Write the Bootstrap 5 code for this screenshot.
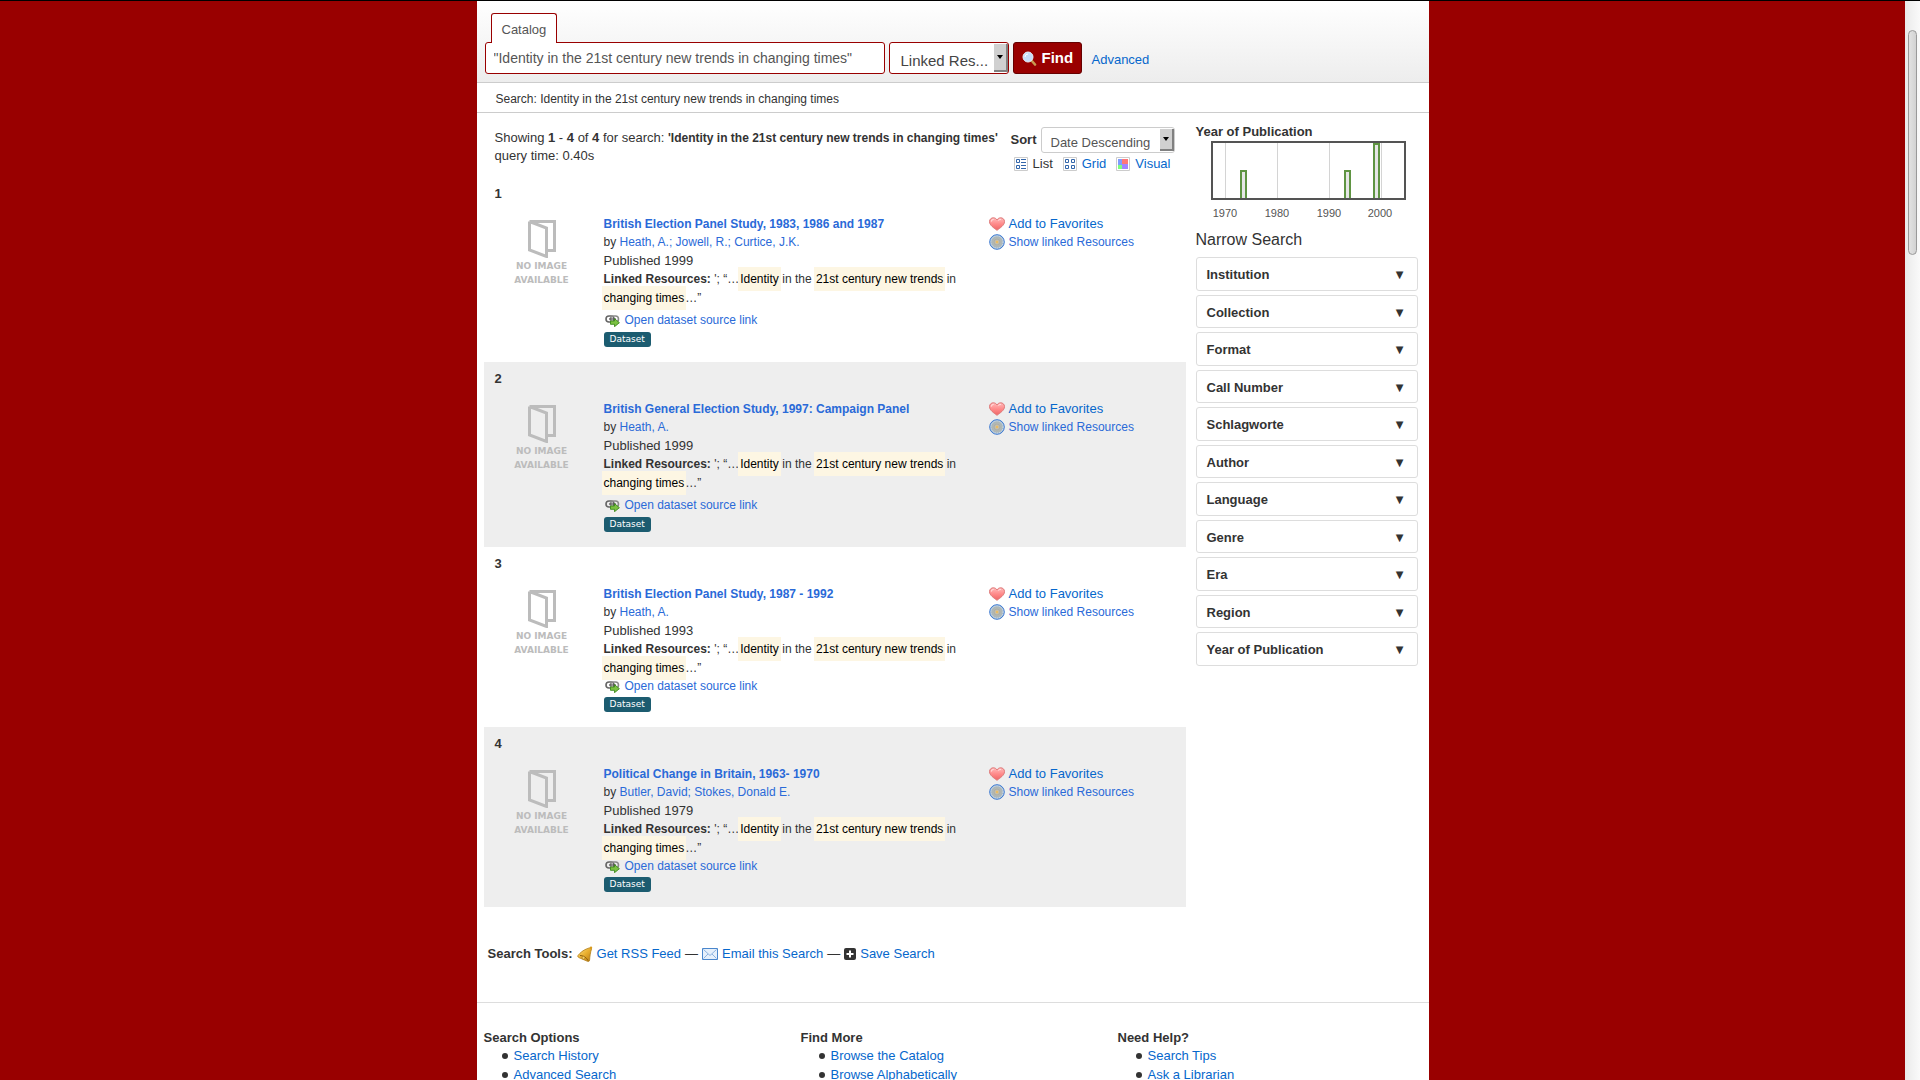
<!DOCTYPE html>
<html lang="en">
<head>
<meta charset="utf-8">
<meta name="viewport" content="width=device-width, initial-scale=1">
<title>Search: Identity in the 21st century new trends in changing times</title>
<link href="https://cdn.jsdelivr.net/npm/bootstrap@5.3.0/dist/css/bootstrap.min.css" rel="stylesheet">
<style>
  body { font-family: "Liberation Sans", Arial, sans-serif; font-size: 13px; line-height: 18px; color: #333; background: #900; overflow: hidden; }
  a { color: #0667cc; text-decoration: none; }
  a:hover { text-decoration: underline; }
  svg { flex: none; display: block; }
  .viewport { height: 100vh; border-top: 1px solid #000; overflow: hidden; }
  .sheet { width: 100%; max-width: 952px; background: #fff; min-height: 100vh; }

  .searchbar { background: linear-gradient(#fff, #ededed); border-bottom: 1px solid #ccc; padding: 12px 8px 8px; }
  .source-tab { display: inline-block; background: #fff; border: 1px solid #900; border-bottom: 0; border-radius: 3px 3px 0 0; padding: 7px 10px 4px; height: 30px; margin: 0 0 -1px 6px; color: #555; position: relative; z-index: 1; }
  .query-box { width: 400px; height: 32px; border: 1px solid #900; border-radius: 3px; padding: 0 8px; font-size: 14px; color: #555; background: #fff; }
  .picker { position: relative; }
  .picker select { appearance: none; background: #fff; color: #444; border-radius: 3px; width: 100%; }
  .picker-kind { width: 120px; }
  .picker-kind select { height: 32px; border: 1px solid #900; font-size: 15px; padding: 5px 16px 0 11px; }
  .picker-sort { width: 134px; }
  .picker-sort select { height: 26px; border: 1px solid #ccc; font-size: 13px; color: #555; padding: 6px 16px 0 9px; }
  .picker-arrow { position: absolute; top: 2px; right: 1px; bottom: 2px; width: 14px; background: #d0d0d0; border: solid #808080; border-width: 0 2px 2px 0; pointer-events: none; display: flex; align-items: center; justify-content: center; }
  .find-btn { height: 32px; width: 69px; background: #900; border: 1px solid #600; border-radius: 3px; color: #fff; font-weight: 700; font-size: 15px; padding: 0 8px; display: flex; align-items: center; gap: 5px; }
  .advanced-link { margin-left: 10px; padding-top: 3px; }
  .crumbs { border-bottom: 1px solid #ccc; font-size: 12px; line-height: 18px; padding: 7px 19px 4px; }

  .results { width: 702px; margin-left: 7px; }
  .summary { padding: 14px 11px 0; min-height: 64px; }
  .summary-text { padding-top: 2px; }
  .summary-text .terms { font-size: 12px; }
  .views { gap: 10px; padding: 2px 4px 0 0; }
  .view-link { display: flex; align-items: center; gap: 5px; }

  .record { padding: 8px 0 14px 11px; }
  .record.roomy { padding-bottom: 15px; }
  .record:nth-of-type(even) { background: #eee; }
  .record-no { font-weight: 700; margin-bottom: 12px; }
  .cover { width: 94px; margin-right: 15px; display: flex; flex-direction: column; align-items: center; font: 700 9px/14px "DejaVu Sans", sans-serif; color: #bcbcbc; text-align: center; }
  .cover svg { margin: 5px 0 1px; }
  .details { font-size: 12px; padding-right: 20px; }
  .details a { color: #2a6ad8; }
  .details .record-title { font-weight: 700; font-size: 12px; line-height: 18px; margin: 0; }
  .issued { font-size: 13px; line-height: 19px; }
  .linked { line-height: 19px; margin: 0; }
  .hit { background: #fdf6e3; color: #000; padding: 5px 2px; margin: 0 -2px 0 -1px; }
  .linked br + .hit { margin: 0 -1px 0 -2px; }
  .source-link { display: flex; align-items: center; gap: 5px; margin: 0; padding-left: 1px; line-height: 17px; }
  .roomy .source-link { margin-top: 4px; }
  .kind-tag { display: inline-block; background: #1c5c70; color: #fff; border-radius: 3px; font: 9px/15px "DejaVu Sans", sans-serif; padding: 0 6px; vertical-align: top; margin-top: 2px; }
  .roomy .kind-tag { margin-top: 3px; }
  .actions { width: 197px; }
  .actions a { display: flex; align-items: center; gap: 4px; }
  .actions .aux { color: #2a6ad8; font-size: 12px; }

  .tools { padding: 38px 4px 39px; }
  .facets { width: 222px; margin: 10px 11px 0 10px; }
  .facets h3 { font-size: 13px; font-weight: 700; line-height: 17px; margin: 0; }
  .facets h4 { font-size: 16px; font-weight: 400; line-height: 20px; margin: 10px 0 7px; }
  .facet { width: 100%; display: flex; justify-content: space-between; align-items: center; height: 34px; margin-bottom: 4px; background: #fff; border: 1px solid #ddd; border-radius: 3px; padding: 2px 13px 0 10px; font-weight: 700; color: #333; }
  .facet:nth-child(even) { height: 33px; }
  .facet span:last-child { font: 10px/10px "DejaVu Sans", sans-serif; }

  .foot { border-top: 1px solid #ddd; padding: 25px 0 0 7px; }
  .foot section { width: 317px; flex: none; }
  .foot section:last-child { flex: 0 1 317px; }
  .foot h5 { font-size: 13px; line-height: 19px; font-weight: 700; margin: 0; }
  .foot ul { padding-left: 18px; margin: 0; line-height: 18px; list-style: none; }
  .foot li { display: flex; align-items: center; gap: 6px; margin-bottom: 1px; }
  .foot li::before { content: ""; width: 6px; height: 6px; border-radius: 50%; background: #333; }

  .scroll-track { width: 15px; background: linear-gradient(90deg, #eaeaea, #fafafa); padding: 29px 3px 0; }
  .scroll-thumb { width: 9px; height: 225px; border: 1px solid #999; border-radius: 5px; background: linear-gradient(90deg, #e2e2e2, #d2d2d2); }
</style>
<script src="https://cdn.jsdelivr.net/npm/bootstrap@5.3.0/dist/js/bootstrap.bundle.min.js"></script>
</head>
<body>
<svg width="0" height="0" class="position-absolute" aria-hidden="true">
  <defs>
    <linearGradient id="gHeart" x1="0" y1="0" x2="0" y2="1"><stop offset="0" stop-color="#fbb"/><stop offset=".5" stop-color="#ff8a8a"/><stop offset="1" stop-color="#e66"/></linearGradient>
    <linearGradient id="gBell" x1="0" y1="0" x2="1" y2="1"><stop offset="0" stop-color="#fbe08a"/><stop offset=".5" stop-color="#eab030"/><stop offset="1" stop-color="#b87a10"/></linearGradient>
    <radialGradient id="gHub"><stop offset="0" stop-color="#e8c890"/><stop offset=".35" stop-color="#b9b9ae"/><stop offset=".75" stop-color="#a9b6bb"/><stop offset="1" stop-color="#b5cdea"/></radialGradient>
    <symbol id="i-book" viewBox="0 0 28 38"><path d="M1.5 1.5h25v29h-8M1.5 1.5v28.500l17 6.500V8L1.500 1.500" fill="none" stroke="#bcbcbc" stroke-width="3"/></symbol>
    <symbol id="i-heart" viewBox="0 0 16 14"><path d="M8 13.300C5 11 .5 8.300 .5 4.600.5 2.300 2.300.8 4.300.8 6 .8 7.300 1.700 8 3c.7-1.300 2-2.200 3.700-2.200 2 0 3.800 1.500 3.800 3.800C15.500 8.300 11 11 8 13.300z" fill="url(#gHeart)" stroke="#d77"/><path d="M2.500 4.500c0-1.300.8-2 2-2M9.500 3.500c.5-.8 1.300-1 2.300-1" stroke="#fff" fill="none" opacity=".7"/></symbol>
    <symbol id="i-hub" viewBox="0 0 16 16"><circle cx="8" cy="8" r="7.300" fill="url(#gHub)" stroke="#3a78d0"/><circle cx="8" cy="8" r="6" fill="none" stroke="#d8e6f6" stroke-width=".8" stroke-dasharray="1 1"/><circle cx="8" cy="8" r="3" fill="none" stroke="#a4aaa8" stroke-width=".6"/><circle cx="8" cy="8" r="1" fill="#efb850"/></symbol>
    <symbol id="i-chain" viewBox="0 0 15 13"><rect x="1" y="2" width="8" height="6" rx="3" fill="none" stroke="#666" stroke-width="1.600"/><rect x="5.500" y="2" width="8" height="6" rx="3" fill="none" stroke="#8a8a8a" stroke-width="1.600"/><path d="M4 5h7" stroke="#555" stroke-width="1.200"/><path d="M5.500 7h4V4.700L14.400 8.700 9.500 12.700v-2.400h-4z" fill="#7cc142" stroke="#3c8a1c" stroke-width=".9"/></symbol>
  </defs>
</svg>

<div class="viewport d-flex">
  <div class="flex-grow-1 d-flex justify-content-center">
  <div class="sheet">
    <header class="searchbar">
      <a class="source-tab" href="#">Catalog</a>
      <form class="d-flex align-items-center" onsubmit="return false">
        <input class="query-box me-1" type="text" aria-label="Search terms" value="&quot;Identity in the 21st century new trends in changing times&quot;">
        <div class="picker picker-kind me-1">
          <select aria-label="Search type"><option>Linked Res...</option></select>
          <span class="picker-arrow"><svg width="6" height="4"><path d="M0 0h6L3 4z" fill="#000"/></svg></span>
        </div>
        <button class="find-btn" type="submit">
          <svg width="15" height="15" viewBox="0 0 15 15"><path d="M9 9l4 4.500" stroke="#c89a50" stroke-width="2.600" stroke-linecap="round"/><circle cx="6" cy="6" r="5" fill="#c6defa" stroke="#e8f0fa"/><path d="M3 6a3 3 0 0 1 3-3" stroke="#fff" fill="none"/></svg>
          Find</button>
        <a class="advanced-link" href="#">Advanced</a>
      </form>
    </header>
    <nav class="crumbs" aria-label="Breadcrumb">Search: Identity in the 21st century new trends in changing times</nav>

    <div class="d-flex">
      <main class="results">
        <div class="summary d-flex justify-content-between">
          <div class="summary-text">Showing <b>1</b> - <b>4</b> of <b>4</b> for search: <b class="terms">'Identity in the 21st century new trends in changing times'</b><br>query time: 0.40s</div>
          <div>
            <div class="d-flex gap-1 justify-content-end">
              <label class="fw-bold pt-1" for="sort">Sort</label>
              <div class="picker picker-sort"><select id="sort"><option>Date Descending</option></select>
                <span class="picker-arrow"><svg width="6" height="4"><path d="M0 0h6L3 4z" fill="#000"/></svg></span></div>
            </div>
            <div class="views d-flex justify-content-end">
              <span class="view-link"><svg width="14" height="14"><path d="M.5.5h13v13H.5z" fill="#fff" stroke="#ccc"/><path d="M2.500 2.500h3v3h-3zM2.500 8.500h3v3h-3z" fill="none" stroke="#36a"/><path d="M7 2.500h5M7 5.500h5M7 8.500h5M7 11.500h5" stroke="#36a"/></svg>List</span>
              <a class="view-link" href="#"><svg width="14" height="14"><path d="M.5.5h13v13H.5z" fill="#fff" stroke="#ccc"/><path d="M2.500 2.500h3v3h-3zM8.500 2.500h3v3h-3zM2.500 8.500h3v3h-3zM8.500 8.500h3v3h-3z" fill="none" stroke="#36a"/></svg>Grid</a>
              <a class="view-link" href="#"><svg width="14" height="14"><path d="M.5.5h13v13H.5z" fill="#fff" stroke="#ccc"/><path d="M2 2h4v6H2z" fill="#7f9cff"/><path d="M6 2h6v5H6z" fill="#ff7777"/><path d="M2 8h4v4H2z" fill="#7dff7d"/><path d="M6 7h6v5H6z" fill="#a184ff"/></svg>Visual</a>
            </div>
          </div>
        </div>

        <div id="records"></div>

        <div class="tools d-flex align-items-center gap-1">
          <b>Search Tools:</b>
          <svg width="16" height="16" viewBox="0 0 16 16"><path d="M14 1.500C10 2.500 5.500 4 1 9.500c-.8 1.200.5 2 2 2.600l7 3c1.500.6 2.500.5 2.600-1 .2-4 .9-8 1.900-11z" fill="url(#gBell)" stroke="#b07c18" stroke-width=".8"/><path d="M3 9.500c3.500 0 6.500 2 8 5" stroke="#8f5f0c" fill="none"/><circle cx="14" cy="1.800" r="1.200" fill="#d89a20"/><circle cx="6.500" cy="11.800" r="1.500" fill="#f7d36a" stroke="#9a6810" stroke-width=".6"/></svg>
          <a href="#">Get RSS Feed</a> <span>—</span>
          <svg width="16" height="12"><path d="M.5.5h15v11H.5z" fill="#e6f0fb" stroke="#4a86cc"/><path d="M1.500 1.500L8 7.500l6.500-6M1.500 10.500l4.500-4.500M14.500 10.500L10 6" fill="none" stroke="#8eb3df"/></svg>
          <a href="#">Email this Search</a> <span>—</span>
          <svg width="12" height="12"><rect width="12" height="12" rx="2" fill="#333"/><path d="M6 2.500v7M2.500 6h7" stroke="#fff" stroke-width="2"/></svg>
          <a href="#">Save Search</a>
        </div>
      </main>

      <aside class="facets">
        <h3>Year of Publication</h3>
        <svg width="222" height="80" role="img" aria-label="Results by year">
          <path d="M29.500 2v58M81.500 2v58M133.500 2v58M185.500 2v58" stroke="#d4d4d4"/>
          <g fill="#e6e6e6" stroke="#5f9442" stroke-width="2"><path d="M45 60V31h5v29M149 60V31h5v29M178 60V4h5v56"/></g>
          <rect x="16" y="2" width="193" height="57" fill="none" stroke="#545454" stroke-width="2"/>
          <g font-family="Liberation Sans, Arial, sans-serif" font-size="11" fill="#545454" text-anchor="middle"><text x="29" y="77">1970</text><text x="81" y="77">1980</text><text x="133" y="77">1990</text><text x="184" y="77">2000</text></g>
        </svg>
        <h4>Narrow Search</h4>
        <div>
          <button class="facet" type="button"><span>Institution</span><span>▼</span></button>
          <button class="facet" type="button"><span>Collection</span><span>▼</span></button>
          <button class="facet" type="button"><span>Format</span><span>▼</span></button>
          <button class="facet" type="button"><span>Call Number</span><span>▼</span></button>
          <button class="facet" type="button"><span>Schlagworte</span><span>▼</span></button>
          <button class="facet" type="button"><span>Author</span><span>▼</span></button>
          <button class="facet" type="button"><span>Language</span><span>▼</span></button>
          <button class="facet" type="button"><span>Genre</span><span>▼</span></button>
          <button class="facet" type="button"><span>Era</span><span>▼</span></button>
          <button class="facet" type="button"><span>Region</span><span>▼</span></button>
          <button class="facet" type="button"><span>Year of Publication</span><span>▼</span></button>
        </div>
      </aside>
    </div>

    <footer class="foot d-flex">
      <section><h5>Search Options</h5><ul><li><a href="#">Search History</a></li><li><a href="#">Advanced Search</a></li></ul></section>
      <section><h5>Find More</h5><ul><li><a href="#">Browse the Catalog</a></li><li><a href="#">Browse Alphabetically</a></li></ul></section>
      <section><h5>Need Help?</h5><ul><li><a href="#">Search Tips</a></li><li><a href="#">Ask a Librarian</a></li></ul></section>
    </footer>
  </div>
  </div>
  <div class="scroll-track" aria-hidden="true"><div class="scroll-thumb"></div></div>
</div>
<script>
  const records = [
    { title: "British Election Panel Study, 1983, 1986 and 1987", authors: ["Heath, A.", "Jowell, R.", "Curtice, J.K."], year: 1999, roomy: true },
    { title: "British General Election Study, 1997: Campaign Panel", authors: ["Heath, A."], year: 1999, roomy: true },
    { title: "British Election Panel Study, 1987 - 1992", authors: ["Heath, A."], year: 1993 },
    { title: "Political Change in Britain, 1963- 1970", authors: ["Butler, David", "Stokes, Donald E."], year: 1979 }
  ];
  document.getElementById("records").innerHTML = records.map((r, i) => `
    <article class="record ${r.roomy ? "roomy" : ""}">
      <div class="record-no">${i + 1}</div>
      <div class="d-flex">
        <div class="cover"><svg width="28" height="38"><use href="#i-book"/></svg>NO IMAGE<br>AVAILABLE</div>
        <div class="details flex-grow-1">
          <h2 class="record-title"><a href="#">${r.title}</a></h2>
          <div>by ${r.authors.map((a, n) => `<a href="#">${n ? "; " : ""}${a}</a>`).join("")}</div>
          <div class="issued">Published ${r.year}</div>
          <p class="linked"><b>Linked Resources:</b> '; “…<span class="hit">Identity</span> in the <span class="hit">21st century new trends</span> in <br><span class="hit">changing times</span>…”</p>
          <p class="source-link"><svg width="15" height="13"><use href="#i-chain"/></svg><a href="#">Open dataset source link</a></p>
          <span class="kind-tag">Dataset</span>
        </div>
        <div class="actions">
          <a href="#"><svg width="16" height="14"><use href="#i-heart"/></svg>Add to Favorites</a>
          <a class="aux" href="#"><svg width="16" height="16"><use href="#i-hub"/></svg>Show linked Resources</a>
        </div>
      </div>
    </article>`).join("");
</script>
</body>
</html>
